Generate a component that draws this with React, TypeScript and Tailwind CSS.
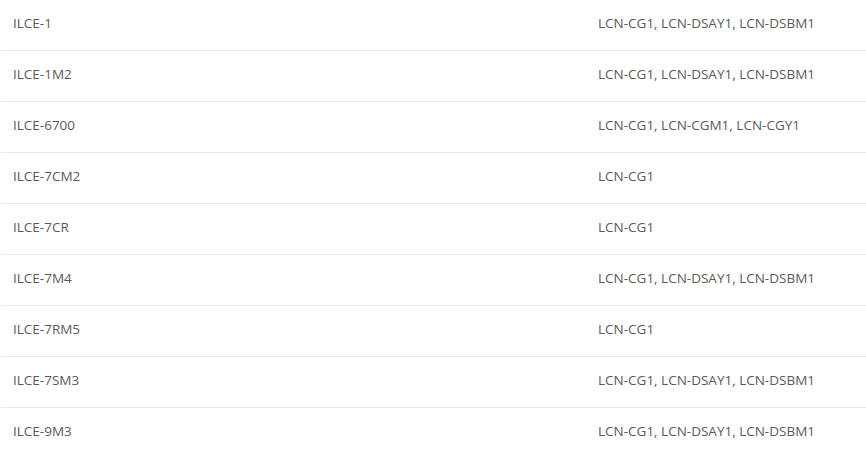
import React from 'react';

const rows: [string, string][] = [
  ['ILCE-1', 'LCN-CG1, LCN-DSAY1, LCN-DSBM1'],
  ['ILCE-1M2', 'LCN-CG1, LCN-DSAY1, LCN-DSBM1'],
  ['ILCE-6700', 'LCN-CG1, LCN-CGM1, LCN-CGY1'],
  ['ILCE-7CM2', 'LCN-CG1'],
  ['ILCE-7CR', 'LCN-CG1'],
  ['ILCE-7M4', 'LCN-CG1, LCN-DSAY1, LCN-DSBM1'],
  ['ILCE-7RM5', 'LCN-CG1'],
  ['ILCE-7SM3', 'LCN-CG1, LCN-DSAY1, LCN-DSBM1'],
  ['ILCE-9M3', 'LCN-CG1, LCN-DSAY1, LCN-DSBM1'],
];

export default function App() {
  return (
    <div className="w-[866px] bg-white text-[13.5px] text-[#5a5a5a] font-['Open_Sans',sans-serif]">
      {rows.map(([model, licences], i) => (
        <div
          key={model}
          className={`grid grid-cols-[585px_1fr] h-[51px] items-center pb-1 ml-px ${
            i < rows.length - 1 ? 'border-b border-[#e8e8e8]' : ''
          }`}
        >
          <div className="pl-3">{model}</div>
          <div className="pl-3">{licences}</div>
        </div>
      ))}
    </div>
  );
}
